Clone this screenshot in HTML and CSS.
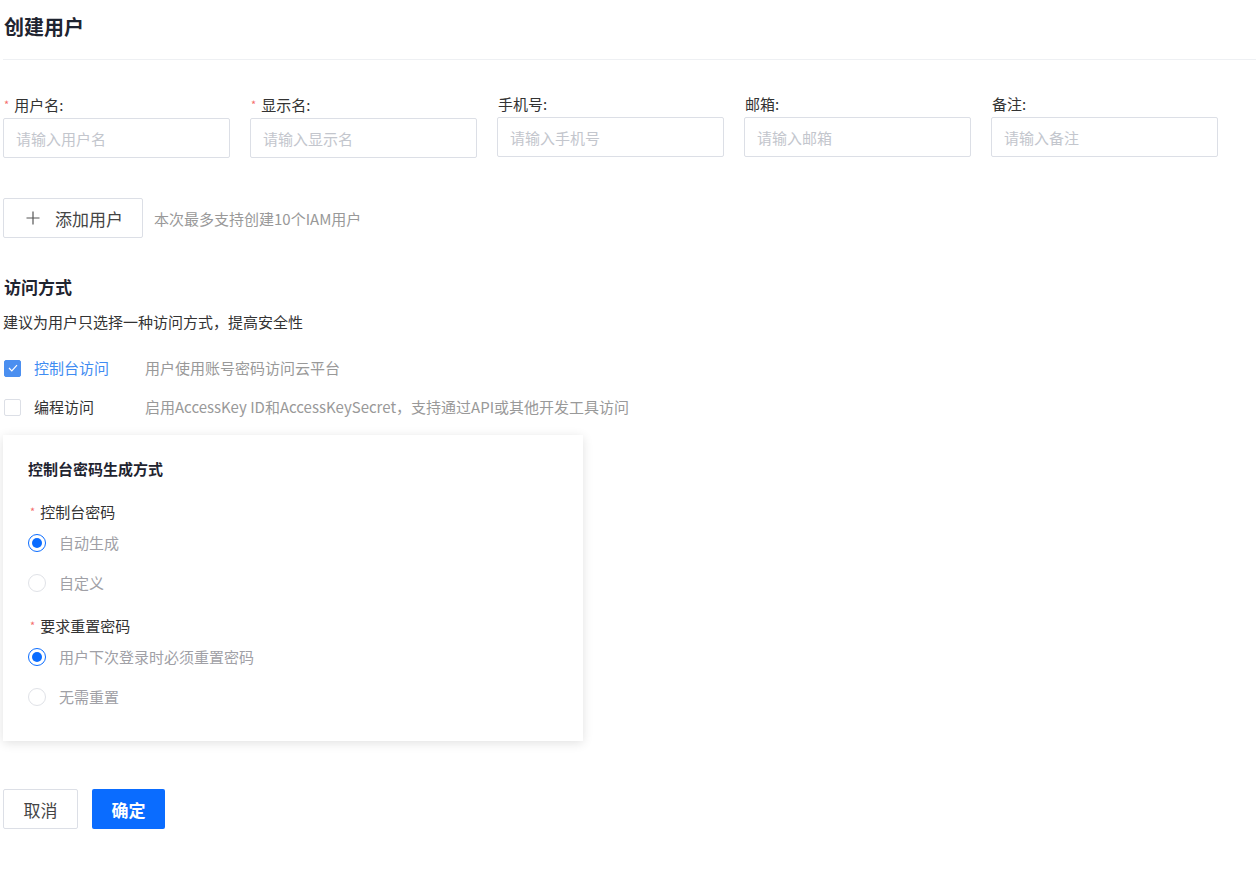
FILE: index.html
```html
<!DOCTYPE html>
<html lang="zh-CN">
<head>
  <meta charset="UTF-8" />
  <title>创建用户</title>
  <link rel="stylesheet" href="styles.css">
</head>
<body>
  <div class="page">
    <div class="page-header">
      <h1>创建用户</h1>
    </div>

    <div class="user-row">
      <div class="field">
        <label><span class="req">*</span>用户名:</label>
        <input type="text" placeholder="请输入用户名" />
      </div>
      <div class="field">
        <label><span class="req">*</span>显示名:</label>
        <input type="text" placeholder="请输入显示名" />
      </div>
      <div class="field">
        <label>手机号:</label>
        <input type="text" placeholder="请输入手机号" />
      </div>
      <div class="field">
        <label>邮箱:</label>
        <input type="text" placeholder="请输入邮箱" />
      </div>
      <div class="field">
        <label>备注:</label>
        <input type="text" placeholder="请输入备注" />
      </div>
    </div>

    <div class="add-row">
      <button class="btn add-btn">
        <svg width="14" height="14" viewBox="0 0 14 14"><path d="M7 0.5v13M0.5 7h13" stroke="#555" stroke-width="1.2" fill="none"/></svg>
        <span>添加用户</span>
      </button>
      <span class="hint">本次最多支持创建10个IAM用户</span>
    </div>

    <div class="section">
      <h2>访问方式</h2>
      <p class="sub">建议为用户只选择一种访问方式，提高安全性</p>

      <div class="check-list">
        <div class="check-row">
          <span class="checkbox checked">
            <svg width="10" height="8" viewBox="0 0 10 8"><path d="M1 4l2.8 2.8L9 1.2" stroke="#fff" stroke-width="1.2" fill="none"/></svg>
          </span>
          <span class="check-label active">控制台访问</span>
          <span class="check-desc">用户使用账号密码访问云平台</span>
        </div>
        <div class="check-row">
          <span class="checkbox"></span>
          <span class="check-label">编程访问</span>
          <span class="check-desc">启用AccessKey ID和AccessKeySecret，支持通过API或其他开发工具访问</span>
        </div>
      </div>

      <div class="card">
        <div class="card-title">控制台密码生成方式</div>

        <div class="group">
          <div class="group-label"><span class="req">*</span>控制台密码</div>
          <div class="radio-row"><span class="radio on"></span>自动生成</div>
          <div class="radio-row"><span class="radio"></span>自定义</div>
        </div>

        <div class="group">
          <div class="group-label"><span class="req">*</span>要求重置密码</div>
          <div class="radio-row"><span class="radio on"></span>用户下次登录时必须重置密码</div>
          <div class="radio-row"><span class="radio"></span>无需重置</div>
        </div>
      </div>
    </div>

    <div class="actions">
      <button class="btn cancel-btn">取消</button>
      <button class="btn ok-btn">确定</button>
    </div>
  </div>
</body>
</html>
```

FILE: styles.css
```css
body {
  margin: 0;
  background: #fff;
  font-family: "Noto Sans CJK SC", "Noto Sans", sans-serif;
  color: #333;
  font-size: 15px;
}
.page {
  padding: 0 0 0 3px;
}
.page-header {
  padding: 13px 0 18px;
  border-bottom: 1px solid #eef0f3;
}
.page-header h1 {
  margin: 0 0 0 1px;
  font-size: 20px;
  line-height: 28px;
  font-weight: 700;
  color: #1f2430;
}
.req {
  color: #f56c6c;
  font-size: 11px;
  margin-right: 5px;
  vertical-align: 2px;
}
.user-row {
  display: flex;
  gap: 20px;
  margin-top: 34px;
}
.field {
  width: 227px;
}
.field label {
  display: block;
  line-height: 20px;
  margin-left: 1px;
  margin-bottom: 3px;
  color: #333;
}
.field input {
  box-sizing: border-box;
  width: 227px;
  height: 40px;
  border: 1px solid #dcdfe6;
  border-radius: 2px;
  padding: 0 12px;
  font-family: inherit;
  font-size: 15px;
  color: #333;
}
.field input::placeholder {
  color: #c3c6cd;
}
.btn {
  box-sizing: border-box;
  height: 40px;
  border-radius: 2px;
  font-family: inherit;
  cursor: pointer;
}
.add-row {
  display: flex;
  align-items: center;
  gap: 11px;
  margin-top: 40px;
}
.add-btn {
  display: flex;
  align-items: center;
  width: 140px;
  padding: 0 0 0 22px;
  border: 1px solid #dcdfe6;
  background: #fff;
  font-size: 17px;
  color: #444;
}
.add-btn svg {
  margin-right: 15px;
}
.hint {
  color: #999;
  font-size: 15px;
}
.section {
  margin-top: 37px;
}
.section h2 {
  margin: 0 0 0 1px;
  font-size: 17px;
  line-height: 24px;
  font-weight: 700;
  color: #1f2430;
}
.sub {
  margin: 13px 0 0;
  line-height: 20px;
  color: #333;
}
.check-list {
  margin-top: 26px;
  display: flex;
  flex-direction: column;
  gap: 19px;
}
.check-row {
  display: flex;
  align-items: center;
  line-height: 20px;
}
.checkbox {
  box-sizing: border-box;
  width: 17px;
  height: 17px;
  margin-left: 1px;
  border: 1px solid #dcdfe6;
  border-radius: 2px;
  display: flex;
  align-items: center;
  justify-content: center;
}
.checkbox.checked {
  background: #4b8ff0;
  border-color: #4b8ff0;
}
.check-label {
  width: 111px;
  margin-left: 13px;
  color: #333;
}
.check-label.active {
  color: #3f8cf2;
}
.check-desc {
  color: #999;
}
.card {
  width: 580px;
  box-sizing: border-box;
  margin-top: 18px;
  padding: 24px 25px 34px;
  background: #fff;
  box-shadow: 0 2px 10px rgba(0, 0, 0, 0.12);
}
.card-title {
  font-size: 15px;
  line-height: 20px;
  font-weight: 700;
  color: #1f2430;
}
.group {
  margin-top: 22px;
}
.group-label {
  line-height: 20px;
  color: #333;
  margin-left: 2px;
}
.radio-row {
  display: flex;
  align-items: center;
  line-height: 20px;
  color: #a0a0a6;
  margin-top: 11px;
}
.radio-row + .radio-row {
  margin-top: 20px;
}
.radio {
  box-sizing: border-box;
  width: 18px;
  height: 18px;
  margin-right: 13px;
  border: 1px solid #e0e2e7;
  border-radius: 50%;
  display: flex;
  align-items: center;
  justify-content: center;
}
.radio.on {
  border: 1.5px solid #0a6cff;
}
.radio.on::after {
  content: "";
  width: 10px;
  height: 10px;
  border-radius: 50%;
  background: #0a6cff;
}
.actions {
  display: flex;
  gap: 14px;
  margin-top: 48px;
}
.cancel-btn {
  width: 75px;
  border: 1px solid #dcdfe6;
  background: #fff;
  color: #444;
  font-size: 17px;
}
.ok-btn {
  width: 73px;
  border: none;
  background: #0a6cff;
  color: #fff;
  font-size: 17px;
  font-weight: 700;
}
```
